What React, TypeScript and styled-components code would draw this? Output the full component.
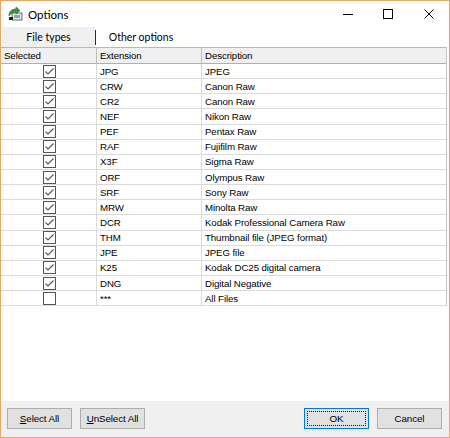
import React from "react";
import styled, { createGlobalStyle } from "styled-components";

const GlobalStyle = createGlobalStyle`
  html, body { margin: 0; padding: 0; background: #ffffff; }
  * { box-sizing: border-box; }
`;

const Window = styled.div`
  width: 450px;
  height: 438px;
  border: 1px solid #e7a865;
  background: #ffffff;
  display: flex;
  flex-direction: column;
  font-family: "Liberation Sans", Arial, sans-serif;
  color: #000;
  overflow: hidden;
`;

const TitleBar = styled.div`
  height: 26px;
  display: flex;
  align-items: center;
  padding-left: 7px;
  flex-shrink: 0;
`;

const TitleText = styled.span`
  font-family: Lato, sans-serif;
  font-size: 11.5px;
  margin-left: 5px;
  margin-top: 1px;
`;

const Controls = styled.div`
  margin-left: auto;
  display: flex;
  height: 100%;
`;

const ControlBtn = styled.div`
  width: 40.5px;
  height: 100%;
  display: flex;
  align-items: center;
  justify-content: center;
`;

const TabBar = styled.div`
  height: 20px;
  display: flex;
  align-items: stretch;
  flex-shrink: 0;
  font-family: Lato, sans-serif;
  font-size: 10.5px;
`;

const Tab = styled.div<{ $active?: boolean }>`
  width: ${(p) => (p.$active ? "93px" : "90px")};
  margin-left: ${(p) => (p.$active ? "1px" : "0")};
  background: ${(p) => (p.$active ? "#f0f0f0" : "transparent")};
  display: flex;
  align-items: center;
  justify-content: center;
  padding-bottom: 1px;
`;

const TabSep = styled.div`
  width: 1px;
  background: #2b2b2b;
  margin: 3px 0 2px 0;
`;

const Table = styled.div`
  margin-right: 2px;
  border-right: 1px solid #c8c8c8;
  border-top: 1px solid #b8b8b8;
  flex-shrink: 0;
  font-size: 9.7px;
  letter-spacing: -0.1px;
`;

const Row = styled.div<{ $header?: boolean }>`
  display: grid;
  grid-template-columns: 96px 105px 1fr;
  height: ${(p) => (p.$header ? "16px" : "15.15px")};
  background: ${(p) => (p.$header ? "#f0f0f0" : "#ffffff")};
  border-bottom: 1px solid ${(p) => (p.$header ? "#b0b0b0" : "#dadada")};
`;

const Cell = styled.div<{ $center?: boolean; $header?: boolean }>`
  border-right: 1px solid ${(p) => (p.$header ? "#c0c0c0" : "#dadada")};
  display: flex;
  align-items: center;
  justify-content: ${(p) => (p.$center ? "center" : "flex-start")};
  padding-left: ${(p) => (p.$center ? "0" : "3px")};
  white-space: nowrap;
  overflow: hidden;
  &:last-child { border-right: none; }
`;

const Check = styled.div`
  width: 13px;
  height: 13px;
  border: 1px solid #555555;
  background: #fff;
  display: flex;
  align-items: center;
  justify-content: center;
  margin-left: 1px;
`;

const Spacer = styled.div`
  flex: 1;
`;

const Footer = styled.div`
  height: 36px;
  background: #f0f0f0;
  display: flex;
  align-items: flex-start;
  padding: 7px 0 0 6px;
  gap: 8px;
  flex-shrink: 0;
`;

const Button = styled.button<{ $default?: boolean }>`
  width: 65px;
  height: 21px;
  background: #e1e1e1;
  border: 1px solid ${(p) => (p.$default ? "#0078d7" : "#adadad")};
  font-family: "Liberation Sans", Arial, sans-serif;
  font-size: 9.8px;
  letter-spacing: -0.1px;
  color: #000;
  padding: 0;
  position: relative;
  &::after {
    content: "";
    display: ${(p) => (p.$default ? "block" : "none")};
    position: absolute;
    inset: 2px;
    border: 1px dotted #1a1a1a;
  }
`;

const PushRight = styled.div`
  margin-left: auto;
`;

const rows: [boolean, string, string][] = [
  [true, "JPG", "JPEG"],
  [true, "CRW", "Canon Raw"],
  [true, "CR2", "Canon Raw"],
  [true, "NEF", "Nikon Raw"],
  [true, "PEF", "Pentax Raw"],
  [true, "RAF", "Fujifilm Raw"],
  [true, "X3F", "Sigma Raw"],
  [true, "ORF", "Olympus Raw"],
  [true, "SRF", "Sony Raw"],
  [true, "MRW", "Minolta Raw"],
  [true, "DCR", "Kodak Professional Camera Raw"],
  [true, "THM", "Thumbnail file (JPEG format)"],
  [true, "JPE", "JPEG file"],
  [true, "K25", "Kodak DC25 digital camera"],
  [true, "DNG", "Digital Negative"],
  [false, "***", "All Files"],
];

const AppIcon = () => (
  <svg width="15" height="14" viewBox="0 0 15 14">
    <rect x="4" y="6" width="10" height="7" fill="#e8e8e8" stroke="#6a6a6a" />
    <rect x="6" y="8" width="6" height="3" fill="#7aa6d6" />
    <path d="M1 9 C1 4 4 2 8 2 L8 0 L12 3.5 L8 7 L8 5 C5 5 3 6 1 9 Z" fill="#2f9a3a" stroke="#1d6b25" strokeWidth="0.6" />
    <rect x="1" y="10" width="4" height="3" fill="#222" />
  </svg>
);

export default function App() {
  return (
    <>
      <GlobalStyle />
      <Window>
        <TitleBar>
          <AppIcon />
          <TitleText>Options</TitleText>
          <Controls>
            <ControlBtn>
              <svg width="10" height="10" viewBox="0 0 10 10">
                <line x1="0" y1="5.5" x2="10" y2="5.5" stroke="#000" strokeWidth="1" />
              </svg>
            </ControlBtn>
            <ControlBtn>
              <svg width="10" height="10" viewBox="0 0 10 10">
                <rect x="0.5" y="0.5" width="9" height="9" fill="none" stroke="#000" strokeWidth="1" />
              </svg>
            </ControlBtn>
            <ControlBtn>
              <svg width="10" height="10" viewBox="0 0 10 10">
                <path d="M0.5 0.5 L9.5 9.5 M9.5 0.5 L0.5 9.5" stroke="#000" strokeWidth="1" />
              </svg>
            </ControlBtn>
          </Controls>
        </TitleBar>
        <TabBar>
          <Tab $active>File types</Tab>
          <TabSep />
          <Tab>Other options</Tab>
        </TabBar>
        <Table>
          <Row $header>
            <Cell $header>Selected</Cell>
            <Cell $header>Extension</Cell>
            <Cell $header>Description</Cell>
          </Row>
          {rows.map(([checked, ext, desc]) => (
            <Row key={ext}>
              <Cell $center>
                <Check>
                  {checked && (
                    <svg width="11" height="11" viewBox="0 0 11 11">
                      <path d="M1.5 5.5 L4 8 L9.5 2.5" fill="none" stroke="#555555" strokeWidth="1.1" />
                    </svg>
                  )}
                </Check>
              </Cell>
              <Cell>{ext}</Cell>
              <Cell>{desc}</Cell>
            </Row>
          ))}
        </Table>
        <Spacer />
        <Footer>
          <Button>
            <u>S</u>elect All
          </Button>
          <Button>
            <u>U</u>nSelect All
          </Button>
          <PushRight />
          <Button $default>OK</Button>
          <Button style={{ marginRight: "7px" }}>Cancel</Button>
        </Footer>
      </Window>
    </>
  );
}
